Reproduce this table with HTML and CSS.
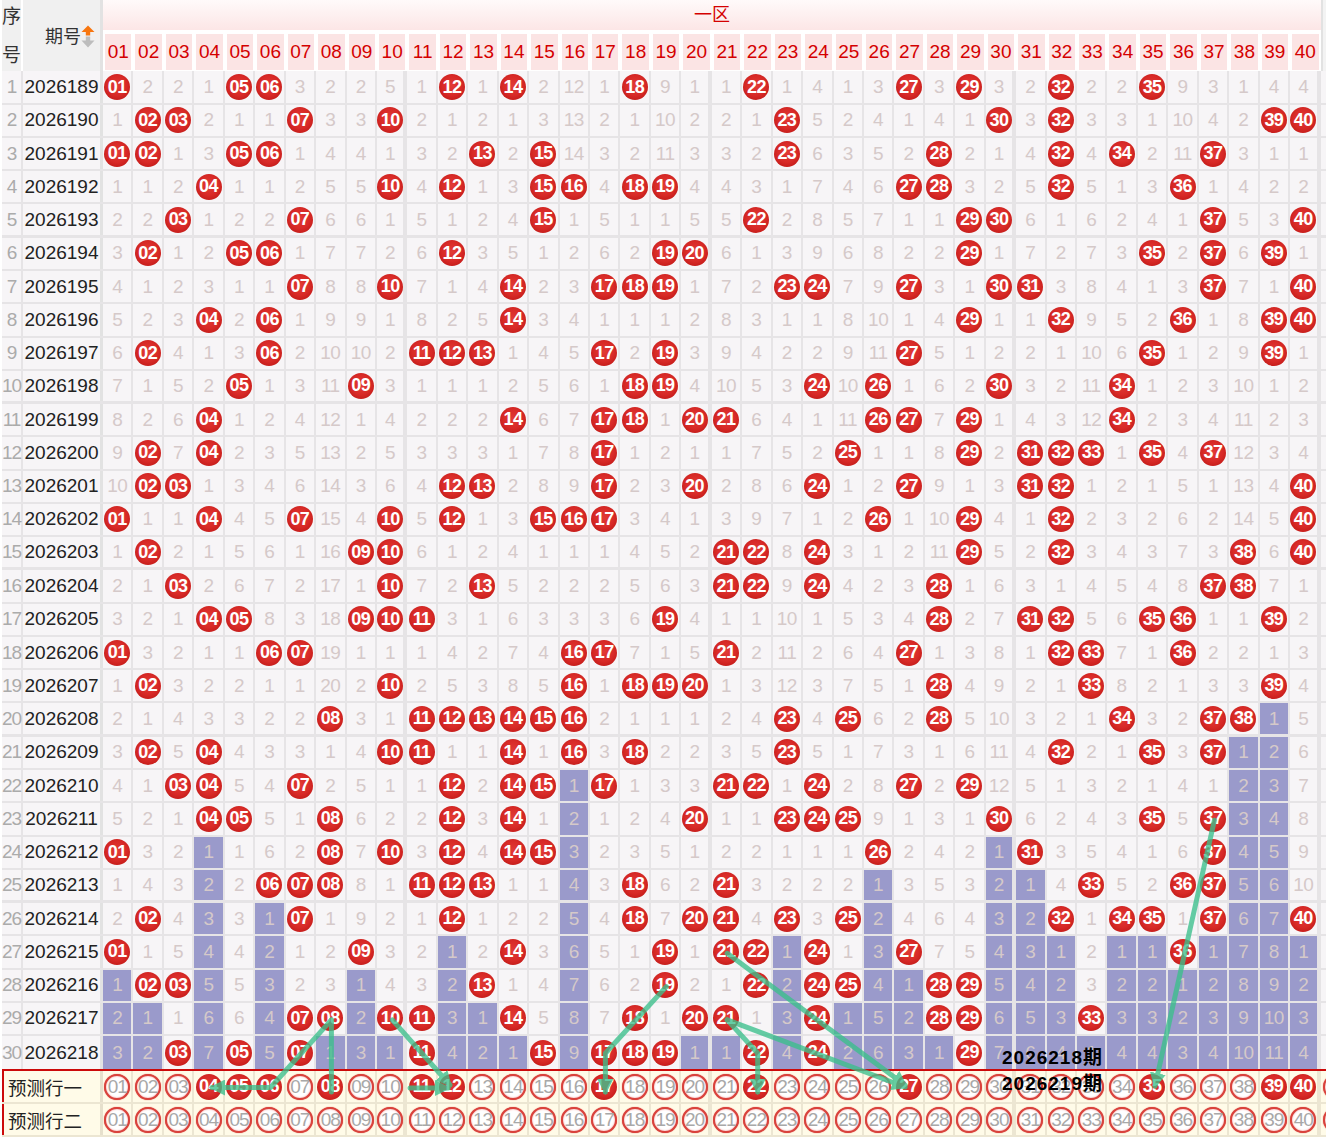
FILE: index.html
```html
<!DOCTYPE html>
<html lang="zh-CN">
<head>
<meta charset="utf-8">
<title>一区走势</title>
<link rel="stylesheet" href="styles.css">
</head>
<body>
<div class="board">
  <div class="head">
    <div class="h-xu"><span>序</span><span>号</span></div>
    <div class="h-qi"><span>期号</span>
      <svg class="sort" width="14" height="23" viewBox="0 0 14 23"><path d="M7 0.5 L13.5 7 L9.2 7 L9.2 10.5 L4.8 10.5 L4.8 7 L0.5 7 Z" fill="#f7760f"/><path d="M4.8 11.5 L9.2 11.5 L9.2 15.5 L13.5 15.5 L7 22.5 L0.5 15.5 L4.8 15.5 Z" fill="#bdbdbd"/></svg>
    </div>
    <div class="h-zone">一区</div>
    <div class="h-nums" id="hnums"></div>
    <div class="h-ext"></div>
  </div>
  <div id="rows"></div>
  <div class="pred" id="pred"></div>
  <svg class="lines" width="1326" height="1137" viewBox="0 0 1326 1137">
    <defs>
      <marker id="ah" markerWidth="3.2" markerHeight="3.2" refX="2.6" refY="1.6" orient="auto" markerUnits="strokeWidth">
        <path d="M0,0 L3.2,1.6 L0,3.2 Z" fill="#3cc08c"/>
      </marker>
    </defs>
    <g stroke="#3cc08c" stroke-width="5" fill="none" stroke-linecap="round" stroke-linejoin="round" opacity="0.78">
      <polyline points="331.4,1019.9 270.5,1087.5 212,1087.5" marker-end="url(#ah)"/>
      <line x1="331.4" y1="1019.9" x2="331.4" y2="1092"/>
      <line x1="392.3" y1="1019.9" x2="450" y2="1085" marker-end="url(#ah)"/>
      <line x1="410" y1="1088" x2="448" y2="1088" marker-end="url(#ah)"/>
      <polyline points="666.3,986.6 605.4,1053.2 605.4,1092" marker-end="url(#ah)"/>
      <line x1="727.2" y1="953.3" x2="905" y2="1085" marker-end="url(#ah)"/>
      <line x1="727.2" y1="1019.9" x2="905" y2="1087" marker-end="url(#ah)"/>
      <polyline points="727.2,1019.9 757.7,1053.2 757.7,1092" marker-end="url(#ah)"/>
      <line x1="1214.4" y1="820.2" x2="1155" y2="1086" marker-end="url(#ah)"/>
    </g>
  </svg>
  <div class="issue-note"><div>2026218期</div><div>2026219期</div></div>
</div>
<script src="script.js"></script>
</body>
</html>
```

FILE: styles.css
```css
html, body {
  margin: 0;
  padding: 0;
  background: #ffffff;
  overflow: hidden;
}
body {
  font-family: "Liberation Sans", Arial, "Noto Sans CJK SC", sans-serif;
}
.board {
  position: relative;
  width: 1352px;
  padding-left: 2px;
}
.head {
  display: grid;
  grid-template-columns: 21px 80px 1218px 31px;
  grid-template-rows: 32.4px 39px;
}
.h-xu {
  grid-row: 1 / 3;
  grid-column: 1;
  background: #f0f0f0;
  border-right: 2px solid #ffffff;
  box-sizing: border-box;
  display: flex;
  flex-direction: column;
  justify-content: space-between;
  align-items: center;
  padding: 3px 0 5px;
  font-family: "Noto Sans CJK SC", sans-serif;
  font-size: 19px;
  line-height: 24px;
  color: #333333;
}
.h-qi {
  grid-row: 1 / 3;
  grid-column: 2;
  background: #f0f0f0;
  border-right: 3px solid #e2e2e2;
  box-sizing: border-box;
  display: flex;
  align-items: center;
  justify-content: flex-end;
  padding-right: 5px;
  font-family: "Noto Sans CJK SC", sans-serif;
  font-size: 18px;
  color: #333333;
}
.h-qi span {
  margin-top: -1px;
}
.sort {
  display: block;
  margin-left: 0;
  margin-top: 1px;
}
.h-zone {
  grid-row: 1;
  grid-column: 3;
  background: linear-gradient(to bottom, #fffafa, #fce6e6);
  color: #d40000;
  font-family: "Noto Sans CJK SC", sans-serif;
  font-size: 18px;
  line-height: 27px;
  text-align: center;
  border-bottom: 2px solid #ffffff;
  box-sizing: border-box;
}
.h-nums {
  grid-row: 2;
  grid-column: 3;
  display: grid;
  grid-template-columns: repeat(40, 30.45px);
}
.hn {
  background: #fbe4e4;
  border: 2px solid #ffffff;
  border-bottom-width: 1px;
  box-shadow: 1px 0 0 #e9e9e9;
  color: #d40000;
  font-size: 19px;
  display: flex;
  align-items: center;
  justify-content: center;
}
.h-ext {
  grid-row: 1 / 3;
  grid-column: 4;
  background: #f3f3f3;
  border-left: 2px solid #e2e2e2;
}

.row {
  display: grid;
  grid-template-columns: 21px 80px repeat(40, 30.45px) 30.45px;
  height: 33.28px;
  box-sizing: border-box;
  border-bottom: 2px solid #e6e4e6;
  background: #f7f5f7;
}
.row.r5 {
  border-bottom-width: 3px;
}
.row.last {
  border-bottom: 0;
}
.c {
  border-right: 2px solid #e6e4e6;
  display: flex;
  align-items: center;
  justify-content: center;
  min-width: 0;
  overflow: visible;
  white-space: nowrap;
}
.c.xu {
  color: #ababab;
  font-size: 19px;
  letter-spacing: -1px;
}
.c.qi {
  color: #222222;
  font-size: 19px;
  border-right: 3px solid #e2e2e2;
}
.c.n {
  color: #d5c9c9;
  font-size: 19px;
  letter-spacing: -0.5px;
}
.c.c10 {
  border-right-width: 4px;
}
.c.p {
  background: #9a9acb;
}
.c.ext {
  border-right: 0;
}
.ball {
  width: 26px;
  height: 26px;
  border-radius: 50%;
  background: radial-gradient(circle at 50% 45%, #e13a36 0%, #d82a27 50%, #c41c1a 78%, #b5201e 92%, rgba(190, 40, 38, 0.55) 100%);
  color: #ffffff;
  font-weight: bold;
  font-size: 18px;
  letter-spacing: -0.6px;
  display: flex;
  align-items: center;
  justify-content: center;
  flex: none;
}
.hol {
  width: 26px;
  height: 26px;
  box-sizing: border-box;
  border-radius: 50%;
  border: 2px solid #d9423c;
  box-shadow: 0 0 1px #d9423c, inset 0 0 2px #f09090;
  background: #ffffff;
  color: #a8a8a8;
  font-size: 19px;
  letter-spacing: -1px;
  display: flex;
  align-items: center;
  justify-content: center;
  flex: none;
}

.pred {
  border-top: 2px solid #cc0a0a;
}
.prow {
  display: grid;
  grid-template-columns: 21px 80px repeat(40, 30.45px) 30.45px;
  height: 33px;
  box-sizing: border-box;
  border-bottom: 2px solid #ece6d2;
  background: #fffbe8;
}
.prow .c {
  border-right-color: #ece6d2;
}
.prow .lab {
  grid-column: 1 / 3;
  justify-content: flex-start;
  padding-left: 4px;
  border-left: 2px solid #cc0a0a;
  border-right: 3px solid #e6e0cc;
  font-family: "Noto Sans CJK SC", sans-serif;
  font-size: 18.5px;
  color: #222222;
}

.lines {
  position: absolute;
  left: 0;
  top: 0;
  pointer-events: none;
}
.issue-note {
  position: absolute;
  left: 1002px;
  top: 1045px;
  font-weight: bold;
  font-size: 19px;
  line-height: 26px;
  letter-spacing: 1px;
  color: #000000;
  font-family: "Liberation Sans", "Noto Sans CJK SC", sans-serif;
  white-space: nowrap;
}
```

FILE: script.js
```javascript
(function () {
  var R = [
    "o 2 2 1 o o 3 2 2 5 1 o 1 o 2 12 1 o 9 1 1 o 1 4 1 3 o 3 o 3 2 o 2 2 o 9 3 1 4 4",
    "1 o o 2 1 1 o 3 3 o 2 1 2 1 3 13 2 1 10 2 2 1 o 5 2 4 1 4 1 o 3 o 3 3 1 10 4 2 o o",
    "o o 1 3 o o 1 4 4 1 3 2 o 2 o 14 3 2 11 3 3 2 o 6 3 5 2 o 2 1 4 o 4 o 2 11 o 3 1 1",
    "1 1 2 o 1 1 2 5 5 o 4 o 1 3 o o 4 o o 4 4 3 1 7 4 6 o o 3 2 5 o 5 1 3 o 1 4 2 2",
    "2 2 o 1 2 2 o 6 6 1 5 1 2 4 o 1 5 1 1 5 5 o 2 8 5 7 1 1 o o 6 1 6 2 4 1 o 5 3 o",
    "3 o 1 2 o o 1 7 7 2 6 o 3 5 1 2 6 2 o o 6 1 3 9 6 8 2 2 o 1 7 2 7 3 o 2 o 6 o 1",
    "4 1 2 3 1 1 o 8 8 o 7 1 4 o 2 3 o o o 1 7 2 o o 7 9 o 3 1 o o 3 8 4 1 3 o 7 1 o",
    "5 2 3 o 2 o 1 9 9 1 8 2 5 o 3 4 1 1 1 2 8 3 1 1 8 10 1 4 o 1 1 o 9 5 2 o 1 8 o o",
    "6 o 4 1 3 o 2 10 10 2 o o o 1 4 5 o 2 o 3 9 4 2 2 9 11 o 5 1 2 2 1 10 6 o 1 2 9 o 1",
    "7 1 5 2 o 1 3 11 o 3 1 1 1 2 5 6 1 o o 4 10 5 3 o 10 o 1 6 2 o 3 2 11 o 1 2 3 10 1 2",
    "8 2 6 o 1 2 4 12 1 4 2 2 2 o 6 7 o o 1 o o 6 4 1 11 o o 7 o 1 4 3 12 o 2 3 4 11 2 3",
    "9 o 7 o 2 3 5 13 2 5 3 3 3 1 7 8 o 1 2 1 1 7 5 2 o 1 1 8 o 2 o o o 1 o 4 o 12 3 4",
    "10 o o 1 3 4 6 14 3 6 4 o o 2 8 9 o 2 3 o 2 8 6 o 1 2 o 9 1 3 o o 1 2 1 5 1 13 4 o",
    "o 1 1 o 4 5 o 15 4 o 5 o 1 3 o o o 3 4 1 3 9 7 1 2 o 1 10 o 4 1 o 2 3 2 6 2 14 5 o",
    "1 o 2 1 5 6 1 16 o o 6 1 2 4 1 1 1 4 5 2 o o 8 o 3 1 2 11 o 5 2 o 3 4 3 7 3 o 6 o",
    "2 1 o 2 6 7 2 17 1 o 7 2 o 5 2 2 2 5 6 3 o o 9 o 4 2 3 o 1 6 3 1 4 5 4 8 o o 7 1",
    "3 2 1 o o 8 3 18 o o o 3 1 6 3 3 3 6 o 4 1 1 10 1 5 3 4 o 2 7 o o 5 6 o o 1 1 o 2",
    "o 3 2 1 1 o o 19 1 1 1 4 2 7 4 o o 7 1 5 o 2 11 2 6 4 o 1 3 8 1 o o 7 1 o 2 2 1 3",
    "1 o 3 2 2 1 1 20 2 o 2 5 3 8 5 o 1 o o o 1 3 12 3 7 5 1 o 4 9 2 1 o 8 2 1 3 3 o 4",
    "2 1 4 3 3 2 2 o 3 1 o o o o o o 2 1 1 1 2 4 o 4 o 6 2 o 5 10 3 2 1 o 3 2 o o 1 5",
    "3 o 5 o 4 3 3 1 4 o o 1 1 o 1 o 3 o 2 2 3 5 o 5 1 7 3 1 6 11 4 o 2 1 o 3 o 1 2 6",
    "4 1 o o 5 4 o 2 5 1 1 o 2 o o 1 o 1 3 3 o o 1 o 2 8 o 2 o 12 5 1 3 2 1 4 1 2 3 7",
    "5 2 1 o o 5 1 o 6 2 2 o 3 o 1 2 1 2 4 o 1 1 o o o 9 1 3 1 o 6 2 4 3 o 5 o 3 4 8",
    "o 3 2 1 1 6 2 o 7 o 3 o 4 o o 3 2 3 5 1 2 2 1 1 1 o 2 4 2 1 o 3 5 4 1 6 o 4 5 9",
    "1 4 3 2 2 o o o 8 1 o o o 1 1 4 3 o 6 2 o 3 2 2 2 1 3 5 3 2 1 4 o 5 2 o o 5 6 10",
    "2 o 4 3 3 1 o 1 9 2 1 o 1 2 2 5 4 o 7 o o 4 o 3 o 2 4 6 4 3 2 o 1 o o 1 o 6 7 o",
    "o 1 5 4 4 2 1 2 o 3 2 1 2 o 3 6 5 1 o 1 o o 1 o 1 3 o 7 5 4 3 1 2 1 1 o 1 7 8 1",
    "1 o o 5 5 3 2 3 1 4 3 2 o 1 4 7 6 2 o 2 1 o 2 o o 4 1 o o 5 4 2 3 2 2 1 2 8 9 2",
    "2 1 1 6 6 4 o o 2 o o 3 1 o 5 8 7 o 1 o o 1 3 o 1 5 2 o o 6 5 3 o 3 3 2 3 9 10 3",
    "3 2 o 7 o 5 o 1 3 1 o 4 2 1 o 9 o o o 1 1 o 4 o 2 6 3 1 o 7 6 4 1 4 4 3 4 10 11 4"
  ];
  function pad(n) { return n < 10 ? "0" + n : "" + n; }
  var j, i;
  var hh = "";
  for (j = 1; j <= 40; j++) { hh += '<div class="hn">' + pad(j) + '</div>'; }
  document.getElementById("hnums").innerHTML = hh;

  var D = R.map(function (s) { return s.split(" "); });
  var last = [];
  for (j = 0; j < 40; j++) { last[j] = -1; }
  D.forEach(function (t, r) { t.forEach(function (v, k) { if (v === "o") { last[k] = r; } }); });

  var html = "";
  D.forEach(function (t, r) {
    var cls = "row" + ((r + 1) % 5 === 0 ? " r5" : "") + (r === D.length - 1 ? " last" : "");
    html += '<div class="' + cls + '"><div class="c xu">' + (r + 1) + '</div><div class="c qi">' + (2026189 + r) + '</div>';
    for (var k = 0; k < 40; k++) {
      var v = t[k] === undefined ? "" : t[k];
      var c = "c n" + ((k + 1) % 10 === 0 ? " c10" : "") + (r > last[k] ? " p" : "");
      html += '<div class="' + c + '">' + (v === "o" ? '<span class="ball">' + pad(k + 1) + '</span>' : v) + '</div>';
    }
    html += '<div class="c ext"></div></div>';
  });
  document.getElementById("rows").innerHTML = html;

  var P1 = [4, 5, 6, 8, 11, 12, 17, 22, 27, 35, 39, 40];
  var labels = ["预测行一", "预测行二"];
  var ph = "";
  for (i = 0; i < 2; i++) {
    ph += '<div class="prow"><div class="c lab">' + labels[i] + '</div>';
    for (j = 1; j <= 40; j++) {
      var filled = i === 0 && P1.indexOf(j) >= 0;
      ph += '<div class="c' + (j % 10 === 0 ? " c10" : "") + '">' + (filled ? '<span class="ball">' : '<span class="hol">') + pad(j) + '</span></div>';
    }
    ph += '<div class="c ext"><span class="hol">01</span></div></div>';
  }
  document.getElementById("pred").innerHTML = ph;
})();
```
